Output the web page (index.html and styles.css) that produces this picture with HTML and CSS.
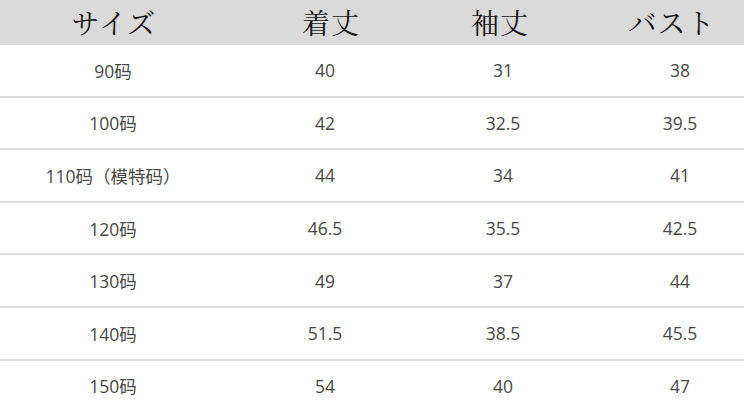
FILE: index.html
```html
<!DOCTYPE html>
<html lang="ja">
<head>
<meta charset="utf-8">
<link rel="stylesheet" href="styles.css">
</head>
<body>
<div class="table">
  <div class="head">
    <div class="hc">サイズ</div>
    <div class="hc">着丈</div>
    <div class="hc">袖丈</div>
    <div class="hc last">バスト</div>
  </div>
  <div class="row"><div class="c">90码</div><div class="c">40</div><div class="c">31</div><div class="c last">38</div></div>
  <div class="row"><div class="c">100码</div><div class="c">42</div><div class="c">32.5</div><div class="c last">39.5</div></div>
  <div class="row"><div class="c">110码（模特码）</div><div class="c">44</div><div class="c">34</div><div class="c last">41</div></div>
  <div class="row"><div class="c">120码</div><div class="c">46.5</div><div class="c">35.5</div><div class="c last">42.5</div></div>
  <div class="row"><div class="c">130码</div><div class="c">49</div><div class="c">37</div><div class="c last">44</div></div>
  <div class="row"><div class="c">140码</div><div class="c">51.5</div><div class="c">38.5</div><div class="c last">45.5</div></div>
  <div class="row end"><div class="c">150码</div><div class="c">54</div><div class="c">40</div><div class="c last">47</div></div>
</div>
</body>
</html>
```
FILE: styles.css
```css
html, body {
  margin: 0;
  padding: 0;
  background: #ffffff;
  overflow: hidden;
}
.table {
  width: 744px;
  display: flex;
  flex-direction: column;
}
.head {
  height: 45px;
  background: #dadada;
  display: grid;
  grid-template-columns: 228px 206px 132px 1fr;
  align-items: center;
  font-family: "Noto Serif CJK JP", "Liberation Serif", "Noto Sans CJK JP", serif;
  font-size: 28px;
  color: #151515;
  letter-spacing: 1px;
}
.hc {
  text-align: center;
  line-height: 45px;
}
.hc.last {
  padding-left: 34px;
}
.row {
  height: 50.6px;
  border-bottom: 2px solid #dcdcdc;
  display: grid;
  grid-template-columns: 226px 198px 158px 1fr;
  align-items: center;
  font-family: "Open Sans", "Noto Sans CJK SC", sans-serif;
  font-size: 17.5px;
  color: #484848;
}
.row.end {
  border-bottom: none;
}
.c {
  text-align: center;
}
.c.last {
  padding-left: 34px;
}
```
